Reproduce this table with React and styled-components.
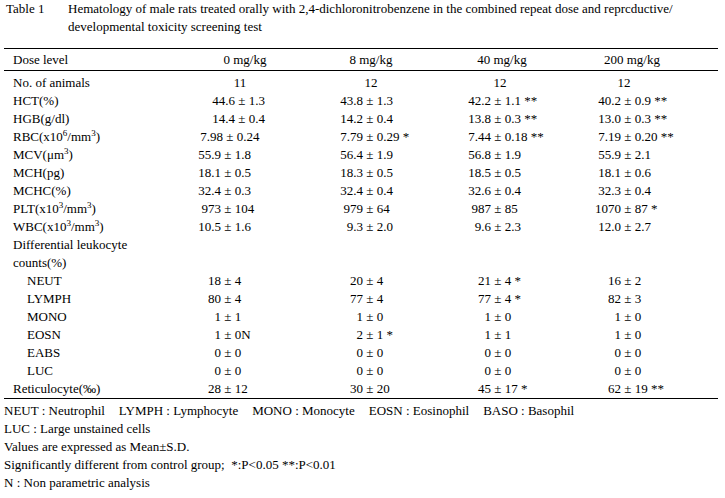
import React from 'react';
import styled, { createGlobalStyle } from 'styled-components';

const GlobalStyle = createGlobalStyle`
  html, body {
    margin: 0;
    padding: 0;
    background: #fff;
  }
  body {
    font-family: "Liberation Serif", "Times New Roman", serif;
    font-size: 13px;
    color: #000;
  }
`;

const GRID = '176px 130px 122px 140px 120px 1fr';

// where each "mean" box ends, counted from the start of its column
const splits = [41, 53, 59, 49];

const Page = styled.div`
  width: 714px;
  padding: 0 7px 0 4px;
`;

const Caption = styled.div`
  display: grid;
  grid-template-columns: 64px 1fr;
  line-height: 18px;
`;

const CaptionLabel = styled.div`
  padding-left: 2px;
`;

const CaptionText = styled.div`
  white-space: nowrap;
`;

const Table = styled.div`
  margin-top: 12px;
  border-top: 1px solid #000;
  border-bottom: 1px solid #000;
`;

const HeadRow = styled.div`
  display: grid;
  grid-template-columns: ${GRID};
  height: 21px;
  align-items: center;
  border-bottom: 1px solid #000;
`;

const Body = styled.div`
  padding-top: 3px;
`;

const Row = styled.div`
  display: grid;
  grid-template-columns: ${GRID};
  min-height: 18px;
  line-height: 18px;
  align-items: start;
`;

const Label = styled.div`
  padding-left: ${(p) => (p.$sub ? 23 : 9)}px;
  white-space: nowrap;

  sup {
    font-size: 9px;
    line-height: 0;
    vertical-align: 5px;
  }
`;

const Center = styled.div`
  text-align: center;
  padding-right: ${(p) => p.$nudge || 0}px;
`;

const Value = styled.div`
  display: grid;
  grid-template-columns: ${(p) => p.$split}px auto;
  white-space: pre;
`;

const Mean = styled.span`
  text-align: right;
`;

const Notes = styled.div`
  margin-top: 3px;
  line-height: 18px;
  white-space: pre;
`;

const NoteLine = styled.div`
  display: flex;
  gap: 14px;
`;

const rows = [
  { label: 'HCT(%)', shift: 14, v: ['44.6|1.3', '43.8|1.3', '42.2|1.1 **', '40.2|0.9 **'] },
  { label: 'HGB(g/dl)', shift: 14, v: ['14.4|0.4', '14.2|0.4', '13.8|0.3 **', '13.0|0.3 **'] },
  {
    label: (
      <>
        RBC(x10<sup>6</sup>/mm<sup>3</sup>)
      </>
    ),
    shift: 2,
    v: ['7.98|0.24', '7.79|0.29 *', '7.44|0.18 **', '7.19|0.20 **'],
  },
  {
    label: (
      <>
        MCV(μm<sup>3</sup>)
      </>
    ),
    v: ['55.9|1.8', '56.4|1.9', '56.8|1.9', '55.9|2.1'],
  },
  { label: 'MCH(pg)', v: ['18.1|0.5', '18.3|0.5', '18.5|0.5', '18.1|0.6'] },
  { label: 'MCHC(%)', v: ['32.4|0.3', '32.4|0.4', '32.6|0.4', '32.3|0.4'] },
  {
    label: (
      <>
        PLT(x10<sup>3</sup>/mm<sup>3</sup>)
      </>
    ),
    v: ['973|104', '979|64', '987|85', '1070|87 *'],
  },
  {
    label: (
      <>
        WBC(x10<sup>3</sup>/mm<sup>3</sup>)
      </>
    ),
    v: ['10.5|1.6', '9.3|2.0', '9.6|2.3', '12.0|2.7'],
  },
  {
    label: (
      <>
        Differential leukocyte
        <br />
        counts(%)
      </>
    ),
  },
  { label: 'NEUT', sub: true, v: ['18|4', '20|4', '21|4 *', '16|2'] },
  { label: 'LYMPH', sub: true, v: ['80|4', '77|4', '77|4 *', '82|3'] },
  { label: 'MONO', sub: true, v: ['1|1', '1|0', '1|0', '1|0'] },
  { label: 'EOSN', sub: true, v: ['1|0N', '2|1 *', '1|1', '1|0'] },
  { label: 'EABS', sub: true, v: ['0|0', '0|0', '0|0', '0|0'] },
  { label: 'LUC', sub: true, v: ['0|0', '0|0', '0|0', '0|0'] },
  { label: 'Reticulocyte(‰)', v: ['28|12', '30|20', '45|17 *', '62|19 **'] },
];

const heads = ['0 mg/kg', '8 mg/kg', '40 mg/kg', '200 mg/kg'];
const animals = [
  { n: '11', nudge: 10 },
  { n: '12', nudge: 0 },
  { n: '12', nudge: 4 },
  { n: '12', nudge: 16 },
];

const abbreviations = [
  'NEUT : Neutrophil',
  'LYMPH : Lymphocyte',
  'MONO : Monocyte',
  'EOSN : Eosinophil',
  'BASO : Basophil',
];

function Cell({ text, split }) {
  const [mean, rest] = text.split('|');
  return (
    <Value $split={split}>
      <Mean>{mean}</Mean>
      <span>{' ± ' + rest}</span>
    </Value>
  );
}

export default function App() {
  return (
    <Page>
      <GlobalStyle />
      <Caption>
        <CaptionLabel>Table 1</CaptionLabel>
        <CaptionText>
          Hematology of male rats treated orally with 2,4-dichloronitrobenzene in the combined repeat dose and reprcductive/
          <br />
          developmental toxicity screening test
        </CaptionText>
      </Caption>

      <Table>
        <HeadRow>
          <Label>Dose level</Label>
          {heads.map((h) => (
            <Center key={h}>{h}</Center>
          ))}
        </HeadRow>

        <Body>
          <Row>
            <Label>No. of animals</Label>
            {animals.map((a, i) => (
              <Center key={i} $nudge={a.nudge}>
                {a.n}
              </Center>
            ))}
          </Row>

          {rows.map((r, i) => (
            <Row key={i}>
              <Label $sub={r.sub}>{r.label}</Label>
              {r.v &&
                r.v.map((t, j) => (
                  <Cell key={j} text={t} split={splits[j] + (j === 0 ? r.shift || 0 : 0)} />
                ))}
            </Row>
          ))}
        </Body>
      </Table>

      <Notes>
        <NoteLine>
          {abbreviations.map((a) => (
            <span key={a}>{a}</span>
          ))}
        </NoteLine>
        <div>LUC : Large unstained cells</div>
        <div>Values are expressed as Mean±S.D.</div>
        <div>Significantly different from control group;  *:P&lt;0.05 **:P&lt;0.01</div>
        <div>N : Non parametric analysis</div>
      </Notes>
    </Page>
  );
}
